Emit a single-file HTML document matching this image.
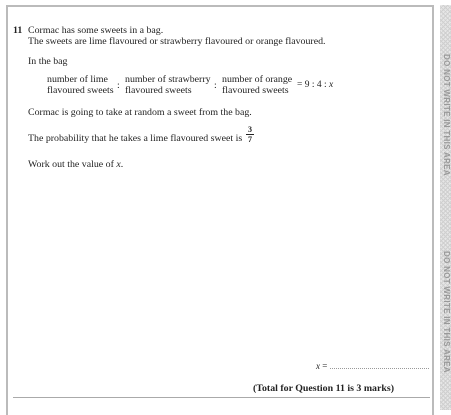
<!DOCTYPE html>
<html><head><style>
body{margin:0;width:451px;height:410px;background:#fff;position:relative;overflow:hidden;font-family:"Liberation Serif",serif;color:#222;font-size:9.9px}
.a{position:absolute;white-space:nowrap}
.frame{position:absolute;left:6px;top:5px;width:428px;height:410px;border:2px solid #bbb;border-bottom:none;box-sizing:border-box}
.strip{position:absolute;left:440px;top:5px;width:11px;height:405px;background-color:#e6e6e6;background-image:repeating-linear-gradient(45deg,#cfcfcf 0 1px,transparent 1px 3px),repeating-linear-gradient(-45deg,#cfcfcf 0 1px,transparent 1px 3px)}
.v{position:absolute;left:439px;width:12px;font-family:"Liberation Sans",sans-serif;font-weight:bold;font-size:8px;color:#999;writing-mode:vertical-rl;text-align:center;letter-spacing:0.3px}
</style></head><body>
<div class="frame"></div>
<div class="strip"></div>
<div class="v" style="top:52px;height:125px">DO NOT WRITE IN THIS AREA</div>
<div class="v" style="top:248px;height:128px">DO NOT WRITE IN THIS AREA</div>
<div class="a" style="left:13px;top:25px;font-weight:bold">11</div>
<div class="a" style="left:28px;top:25px">Cormac has some sweets in a bag.</div>
<div class="a" style="left:28px;top:36px">The sweets are lime flavoured or strawberry flavoured or orange flavoured.</div>
<div class="a" style="left:28px;top:56px">In the bag</div>
<div class="a" style="left:47px;top:74px;line-height:11px">number of lime<br>flavoured sweets</div>
<div class="a" style="left:117px;top:80px">:</div>
<div class="a" style="left:125px;top:74px;line-height:11px">number of strawberry<br>flavoured sweets</div>
<div class="a" style="left:214px;top:80px">:</div>
<div class="a" style="left:222px;top:74px;line-height:11px">number of orange<br>flavoured sweets</div>
<div class="a" style="left:297px;top:80px;font-size:9.5px">= 9 : 4 : <i>x</i></div>
<div class="a" style="left:28px;top:107px">Cormac is going to take at random a sweet from the bag.</div>
<div class="a" style="left:28px;top:133px">The probability that he takes a lime flavoured sweet is</div>
<div class="a" style="left:246px;top:125px;font-size:8px;font-weight:bold;text-align:center;line-height:9px;width:8px">3<div style="border-top:1px solid #222"></div>7</div>
<div class="a" style="left:28px;top:159px">Work out the value of <i>x</i>.</div>
<div class="a" style="left:316px;top:361px;font-size:9px"><i>x</i> =</div>
<div class="a" style="left:330px;top:368px;width:99px;border-top:1px dotted #999"></div>
<div class="a" style="left:253px;top:383px;font-weight:bold">(Total for Question 11 is 3 marks)</div>
<div class="a" style="left:13px;top:397px;width:417px;border-top:1px solid #aaa"></div>
</body></html>
